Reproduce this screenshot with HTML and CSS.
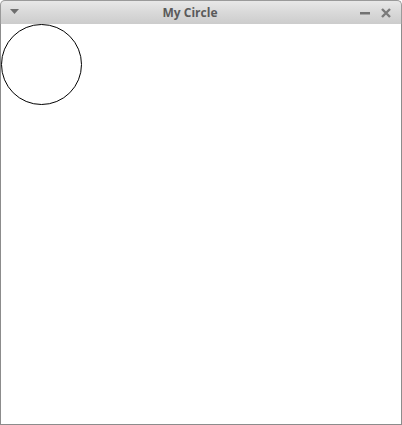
FILE: index.html
```html
<!DOCTYPE html>
<html>
<head>
<meta charset="utf-8">
<link rel="stylesheet" href="styles.css">
</head>
<body>
<div class="window">
  <div class="titlebar">
    <div class="tb-left">
      <svg width="9" height="5" viewBox="0 0 9 5"><polygon points="0,0 9,0 4.5,5" fill="#6e6e6e"/></svg>
    </div>
    <div class="title">My Circle</div>
    <div class="tb-right">
      <svg class="min" width="10" height="3" viewBox="0 0 10 3"><rect x="0" y="0" width="10" height="2.5" fill="#727272"/></svg>
      <svg class="close" width="10" height="10" viewBox="0 0 10 10"><path d="M1 1 L9 9 M9 1 L1 9" stroke="#7a7a7a" stroke-width="2.4" stroke-linecap="butt"/></svg>
    </div>
  </div>
  <div class="content">
    <svg class="canvas" width="82" height="82" viewBox="0 0 82 82"><circle cx="40.5" cy="40.5" r="40" fill="none" stroke="#000" stroke-width="1"/></svg>
  </div>
</div>
</body>
</html>
```
FILE: styles.css
```css
html, body {
  margin: 0;
  padding: 0;
  background: #ffffff;
}
.window {
  width: 402px;
  height: 425px;
  box-sizing: border-box;
  display: flex;
  flex-direction: column;
  font-family: "Open Sans", "Noto Sans", "DejaVu Sans", sans-serif;
}
.titlebar {
  height: 24px;
  box-sizing: border-box;
  border: 1px solid #9a9a9a;
  border-bottom: none;
  border-radius: 5px 5px 0 0;
  background: linear-gradient(to bottom, #e8e8e8 0%, #d9d9d9 50%, #cccccc 100%);
  display: flex;
  align-items: center;
  position: relative;
}
.tb-left {
  width: 26px;
  display: flex;
  justify-content: center;
  margin-top: -2px;
}
.title {
  flex: 1;
  text-align: center;
  font-weight: bold;
  font-size: 12px;
  color: #5a5a5a;
  padding-left: 3px;
  line-height: 24px;
}
.tb-right {
  display: flex;
  align-items: center;
  gap: 11px;
  padding-right: 10px;
  width: 51px;
  box-sizing: border-box;
  justify-content: flex-end;
}
.min {
  margin-top: 1px;
}
.content {
  flex: 1;
  border: 1px solid #8c8c8c;
  border-top: none;
  background: #ffffff;
}
.canvas {
  display: block;
}
```
